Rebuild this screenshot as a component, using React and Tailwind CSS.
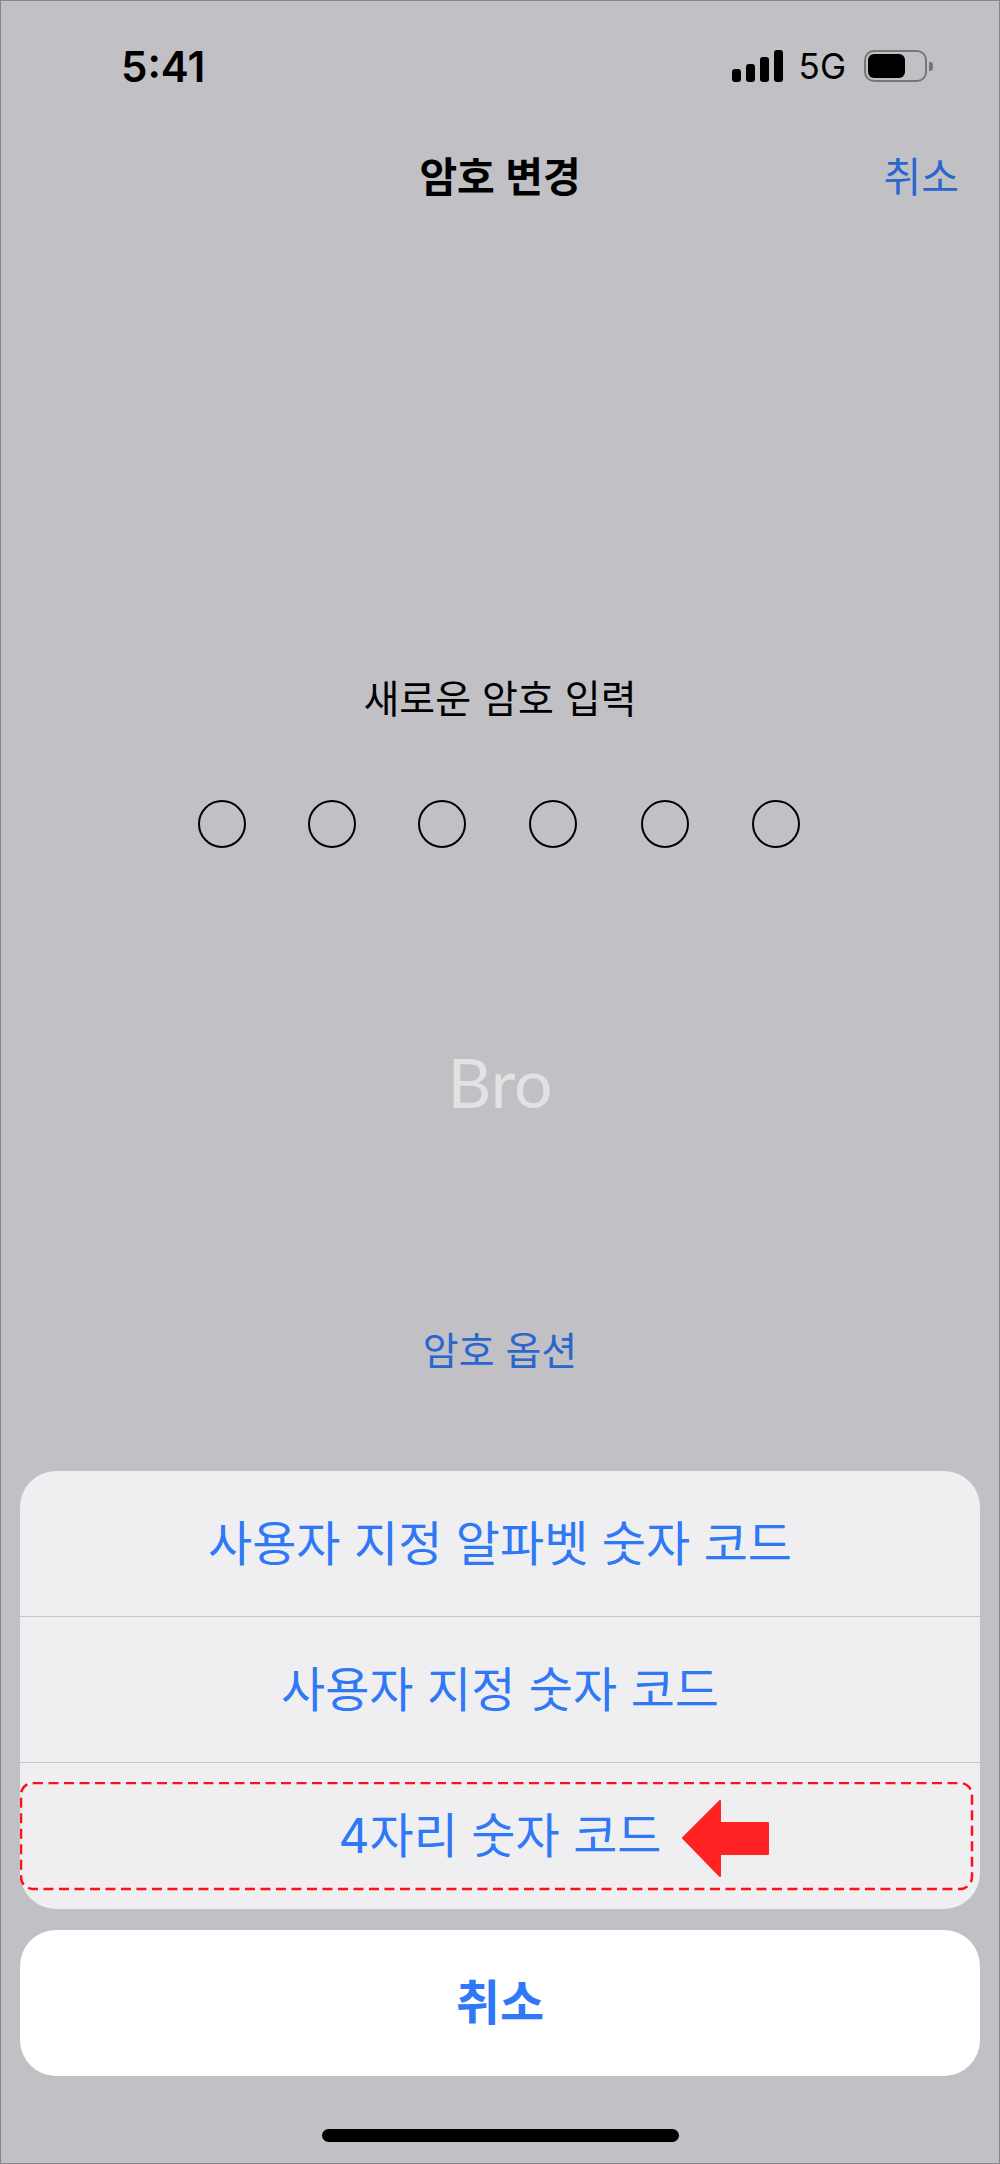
import React from "react";

const krFont = "font-['Inter','Noto_Sans_CJK_KR',sans-serif]";

function StatusBar() {
  return (
    <div className="flex items-center justify-between h-[32px] mt-[49px] pl-[120px] pr-[66px]">
      <span className="text-[42px] leading-[32px] font-semibold text-black pt-[2px]">5:41</span>
      <div className="flex items-center">
        {/* signal */}
        <div className="flex items-end gap-[5px] h-[32px]">
          <div className="w-[9px] h-[13px] bg-black rounded-[3px]" />
          <div className="w-[9px] h-[18px] bg-black rounded-[3px]" />
          <div className="w-[9px] h-[25px] bg-black rounded-[3px]" />
          <div className="w-[9px] h-[32px] bg-black rounded-[3px]" />
        </div>
        <span className="ml-[16px] text-[35px] leading-[32px] font-normal text-black">5G</span>
        {/* battery */}
        <div className="ml-[18px] w-[63px] h-[32px] rounded-[10px] border-[2px] border-[#77777a] p-[2px]">
          <div className="w-[37px] h-full bg-black rounded-[6px]" />
        </div>
        <div className="ml-[2px] w-[4px] h-[9px] bg-[#77777a] rounded-r-[3px]" />
      </div>
    </div>
  );
}

function NavBar() {
  return (
    <div className="grid grid-cols-[1fr_auto_1fr] items-center h-[60px] mt-[65px]">
      <div />
      <span className="text-[41px] leading-[60px] font-semibold text-black">암호 변경</span>
      <span className="text-[41px] leading-[60px] text-[#2a66cc] text-right pr-[40px]">취소</span>
    </div>
  );
}

function PasscodeDots() {
  const dot = "w-[48px] h-[48px] rounded-full border-[2px] border-black";
  return (
    <div className="flex justify-center gap-[62px] mt-[71px] pr-[2px]">
      <div className={dot} />
      <div className={dot} />
      <div className={dot} />
      <div className={`${dot} ml-[1px]`} />
      <div className={`${dot} ml-[2px]`} />
      <div className={`${dot} ml-[1px]`} />
    </div>
  );
}

function SheetRow({ children, border }) {
  return (
    <div
      className={`flex items-center justify-center h-[146px] text-[48px] text-[#2f78f6] ${
        border ? "border-b border-[#c6c6c8]" : ""
      }`}
    >
      {children}
    </div>
  );
}

export default function App() {
  return (
    <div className={`relative w-[1000px] h-[2164px] bg-[#c1c0c5] border border-[#87878a] flex flex-col overflow-hidden ${krFont}`}>
      <StatusBar />
      <NavBar />

      {/* Prompt */}
      <div className="text-center text-[39px] leading-[60px] text-black mt-[462px]">새로운 암호 입력</div>
      <PasscodeDots />

      {/* Watermark */}
      <div className="text-center text-[68px] leading-[70px] font-['Lato',sans-serif] font-normal text-[#e2e2e2] mt-[199px]">
        Bro
      </div>

      <div className="text-center text-[39px] leading-[60px] text-[#2a66cc] mt-[204px]">암호 옵션</div>

      {/* Action sheet */}
      <div className="mt-[90px] mx-[19px] rounded-[36px] bg-[#efeff1] overflow-hidden">
        <SheetRow border>사용자 지정 알파벳 숫자 코드</SheetRow>
        <SheetRow border>사용자 지정 숫자 코드</SheetRow>
        <SheetRow>4자리 숫자 코드</SheetRow>
      </div>

      <div className="mt-[21px] mx-[19px] h-[146px] rounded-[36px] bg-white flex items-center justify-center text-[48px] font-semibold text-[#2f78f6]">
        취소
      </div>

      {/* Home indicator */}
      <div className="mt-[53px] mx-auto w-[357px] h-[13px] rounded-full bg-black" />

      {/* Red annotation */}
      <svg className="absolute left-[19px] top-[1781px]" width="954" height="110" viewBox="0 0 954 110" fill="none">
        <rect x="1" y="1" width="951" height="106" rx="12" stroke="#ff0f1c" strokeWidth="2.5" strokeDasharray="10 5.5" />
      </svg>
      <svg className="absolute left-[680px] top-[1798px]" width="90" height="80" viewBox="0 0 90 80">
        <path d="M2 39 L39 2 V24 H87 V55 H39 V77 Z" fill="#ff2323" stroke="#ff2323" strokeWidth="2" strokeLinejoin="round" />
      </svg>
    </div>
  );
}
